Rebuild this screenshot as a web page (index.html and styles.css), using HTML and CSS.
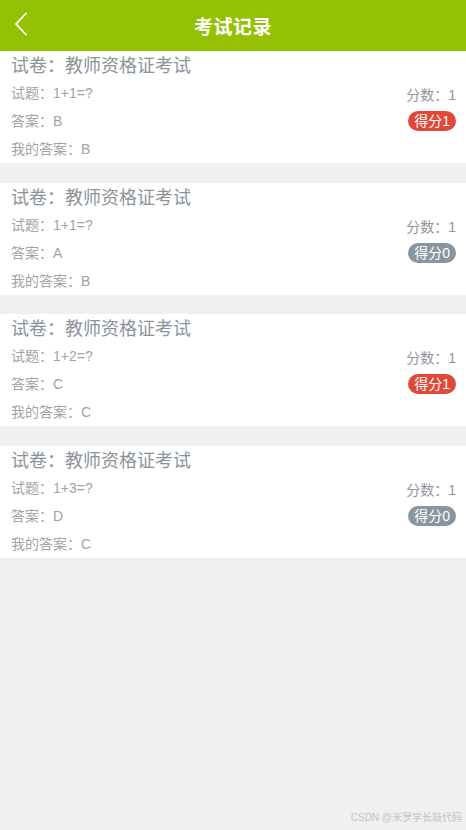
FILE: index.html
```html
<!DOCTYPE html>
<html lang="zh">
<head>
<meta charset="utf-8">
<link rel="stylesheet" href="styles.css">
</head>
<body>
<div class="header">
  <svg class="back" width="14" height="24" viewBox="0 0 14 24"><path d="M12.5 1 L2 12 L12.5 23" fill="none" stroke="#fff" stroke-width="1.8"/></svg>
  <div class="htitle">考试记录</div>
</div>
<div class="list">
  <div class="card">
    <div class="title">试卷：教师资格证考试</div>
    <div class="body">
      <div class="left">
        <div class="row">试题：1+1=?</div>
        <div class="row">答案：B</div>
        <div class="row">我的答案：B</div>
      </div>
      <div class="right">
        <div class="score">分数：1</div>
        <div class="badge red">得分1</div>
      </div>
    </div>
  </div>
  <div class="card">
    <div class="title">试卷：教师资格证考试</div>
    <div class="body">
      <div class="left">
        <div class="row">试题：1+1=?</div>
        <div class="row">答案：A</div>
        <div class="row">我的答案：B</div>
      </div>
      <div class="right">
        <div class="score">分数：1</div>
        <div class="badge gray">得分0</div>
      </div>
    </div>
  </div>
  <div class="card">
    <div class="title">试卷：教师资格证考试</div>
    <div class="body">
      <div class="left">
        <div class="row">试题：1+2=?</div>
        <div class="row">答案：C</div>
        <div class="row">我的答案：C</div>
      </div>
      <div class="right">
        <div class="score">分数：1</div>
        <div class="badge red">得分1</div>
      </div>
    </div>
  </div>
  <div class="card">
    <div class="title">试卷：教师资格证考试</div>
    <div class="body">
      <div class="left">
        <div class="row">试题：1+3=?</div>
        <div class="row">答案：D</div>
        <div class="row">我的答案：C</div>
      </div>
      <div class="right">
        <div class="score">分数：1</div>
        <div class="badge gray">得分0</div>
      </div>
    </div>
  </div>
</div>
<div class="watermark">CSDN @米罗学长敲代码</div>
</body>
</html>
```
FILE: styles.css
```css
html, body {
  margin: 0;
  padding: 0;
}
body {
  width: 466px;
  height: 830px;
  background: #f0f0f0;
  font-family: "Liberation Sans", "Noto Sans CJK SC", sans-serif;
  position: relative;
  overflow: hidden;
}
.header {
  height: 51px;
  background: #95c104;
  display: flex;
  align-items: center;
  justify-content: center;
  position: relative;
}
.back {
  position: absolute;
  left: 14px;
  top: 12px;
}
.htitle {
  color: #fff;
  font-size: 19px;
  font-weight: bold;
  letter-spacing: 0.5px;
}
.list {
  display: flex;
  flex-direction: column;
  gap: 19.6px;
}
.card {
  background: #fff;
  height: 112px;
  box-sizing: border-box;
  padding: 2px 10px 0 11px;
}
.title {
  font-size: 18px;
  line-height: 26px;
  color: #8b939b;
}
.body {
  display: flex;
  justify-content: space-between;
}
.row {
  font-size: 14px;
  line-height: 28px;
  color: #a3a3a3;
}
.right {
  display: flex;
  flex-direction: column;
  align-items: flex-end;
  padding-top: 6px;
}
.score {
  font-size: 14px;
  line-height: 20px;
  color: #8e959c;
}
.badge {
  margin-top: 6px;
  height: 20px;
  line-height: 20px;
  padding: 0 6px;
  border-radius: 10px;
  color: #fff;
  font-size: 14px;
}
.red { background: #e0493a; }
.gray { background: #8797a1; }
.watermark {
  position: absolute;
  right: 4px;
  bottom: 6px;
  font-size: 10px;
  color: #c4c4c4;
}
```
